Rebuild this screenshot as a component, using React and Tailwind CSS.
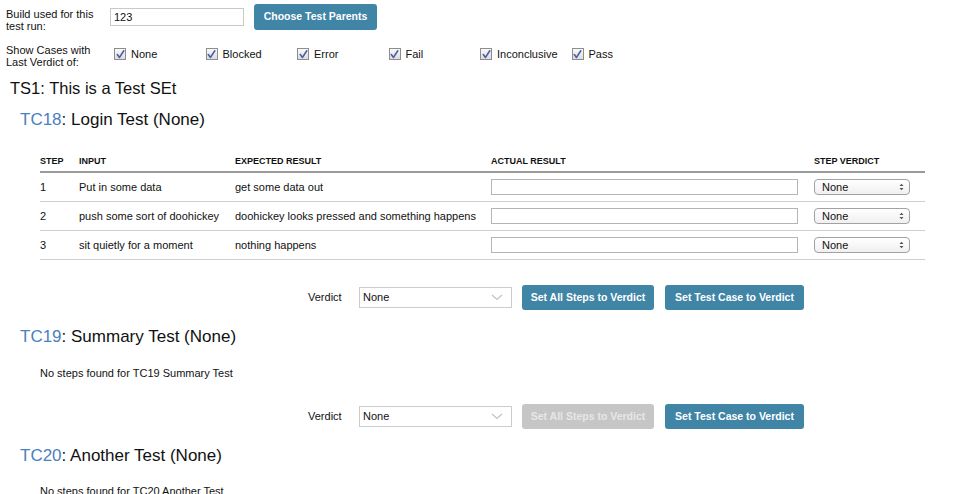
import React from "react";

function Check({ label }) {
  return (
    <div className="flex items-center w-[91.5px] h-[12px]">
      <span className="w-[12px] h-[12px] border border-[#8d8d8d] bg-gradient-to-b from-[#fafafa] to-[#dcdcdc] flex items-center justify-center shrink-0">
        <svg width="9" height="9" viewBox="0 0 9 9">
          <path d="M1.3 4.6 L3.5 7.4 L7.8 0.8" fill="none" stroke="#4a5ea6" strokeWidth="1.6" strokeLinecap="round" strokeLinejoin="round" />
        </svg>
      </span>
      <span className="ml-[5px]">{label}</span>
    </div>
  );
}

function MacSelect() {
  return (
    <div className="w-[96px] h-[16px] border border-[#a2a2a2] rounded-[4px] bg-gradient-to-b from-white to-[#f0f0f0] flex items-center justify-between pl-[7px] pr-[5px] text-[11px]">
      <span>None</span>
      <svg width="5" height="8" viewBox="0 0 5 8">
        <path d="M0.5 3 L2.5 0.8 L4.5 3 Z" fill="#555" />
        <path d="M0.5 5 L2.5 7.2 L4.5 5 Z" fill="#555" />
      </svg>
    </div>
  );
}

function VerdictRow({ disabledAll }) {
  return (
    <div className="flex items-center pl-[308px] h-[25px]">
      <span className="w-[51px]">Verdict</span>
      <div className="w-[153px] h-[21px] border border-[#cccccc] flex items-center justify-between pl-[3px] pr-[8px] text-[11px] bg-white">
        <span>None</span>
        <svg width="12" height="7" viewBox="0 0 12 7">
          <path d="M1 1 L6 5.5 L11 1" fill="none" stroke="#c4c4c4" strokeWidth="1.3" />
        </svg>
      </div>
      <button
        className={
          "ml-[10px] w-[132px] h-[25px] rounded-[3px] font-bold text-[10.5px] " +
          (disabledAll ? "bg-[#c6c6c6] text-[#e6e6e6]" : "bg-[#4084a6] text-white")
        }
      >
        Set All Steps to Verdict
      </button>
      <button className="ml-[11px] w-[139px] h-[25px] rounded-[3px] font-bold text-[10.5px] bg-[#4084a6] text-white">
        Set Test Case to Verdict
      </button>
    </div>
  );
}

function TCHeading({ id, title }) {
  return (
    <div className="pl-[20px] text-[17px] leading-[20px] h-[20px] text-[#111]">
      <span className="text-[#4b7fc0]">{id}</span>: {title}
    </div>
  );
}

const rows = [
  ["1", "Put in some data", "get some data out"],
  ["2", "push some sort of doohickey", "doohickey looks pressed and something happens"],
  ["3", "sit quietly for a moment", "nothing happens"],
];

export default function App() {
  return (
    <div className="w-[979px] h-[494px] overflow-hidden bg-white text-[11px] text-[#111] font-['Liberation_Sans',Arial,sans-serif]">
      {/* Build row */}
      <div className="flex items-start pl-[6px] pt-[4px] h-[40px]">
        <div className="w-[104px] leading-[12px] mt-[4px]">
          Build used for this
          <br />
          test run:
        </div>
        <div className="w-[134px] h-[18px] border border-[#c9c9c9] mt-[4px] flex items-center pl-[3px] text-[11px]">
          123
        </div>
        <button className="ml-[10px] w-[123px] h-[26px] rounded-[3px] bg-[#4084a6] text-white font-bold text-[10.5px]">
          Choose Test Parents
        </button>
      </div>

      {/* Show cases row */}
      <div className="flex items-start pl-[6px] h-[34px] mt-[4px]">
        <div className="w-[108px] leading-[12px]">
          Show Cases with
          <br />
          Last Verdict of:
        </div>
        <div className="flex mt-[4px]">
          <Check label="None" />
          <Check label="Blocked" />
          <Check label="Error" />
          <Check label="Fail" />
          <Check label="Inconclusive" />
          <Check label="Pass" />
        </div>
      </div>

      <div className="pl-[10px] text-[16.5px] leading-[20px] h-[20px]">TS1: This is a Test SEt</div>

      <div className="mt-[12px]">
        <TCHeading id="TC18" title="Login Test (None)" />
      </div>

      {/* Table */}
      <div className="ml-[40px] w-[885px] mt-[22px]">
        <div className="flex items-center h-[21px] border-b-2 border-[#9a9a9a] font-bold text-[9px]">
          <div className="w-[39px]">STEP</div>
          <div className="w-[156px]">INPUT</div>
          <div className="w-[256px]">EXPECTED RESULT</div>
          <div className="w-[323px]">ACTUAL RESULT</div>
          <div>STEP VERDICT</div>
        </div>
        {rows.map((r) => (
          <div key={r[0]} className="flex items-center h-[29px] border-b border-[#cfcfcf]">
            <div className="w-[39px]">{r[0]}</div>
            <div className="w-[156px]">{r[1]}</div>
            <div className="w-[256px]">{r[2]}</div>
            <div className="w-[323px]">
              <div className="w-[307px] h-[16px] border border-[#b5b5b5] bg-white" />
            </div>
            <MacSelect />
          </div>
        ))}
      </div>

      <div className="mt-[25px]">
        <VerdictRow />
      </div>

      <div className="mt-[17px]">
        <TCHeading id="TC19" title="Summary Test (None)" />
      </div>
      <div className="pl-[40px] mt-[20px] leading-[13px] h-[13px]">No steps found for TC19 Summary Test</div>

      <div className="mt-[24px]">
        <VerdictRow disabledAll />
      </div>

      <div className="mt-[17px]">
        <TCHeading id="TC20" title="Another Test (None)" />
      </div>
      <div className="pl-[40px] mt-[19px] leading-[13px] h-[13px]">No steps found for TC20 Another Test</div>
    </div>
  );
}
